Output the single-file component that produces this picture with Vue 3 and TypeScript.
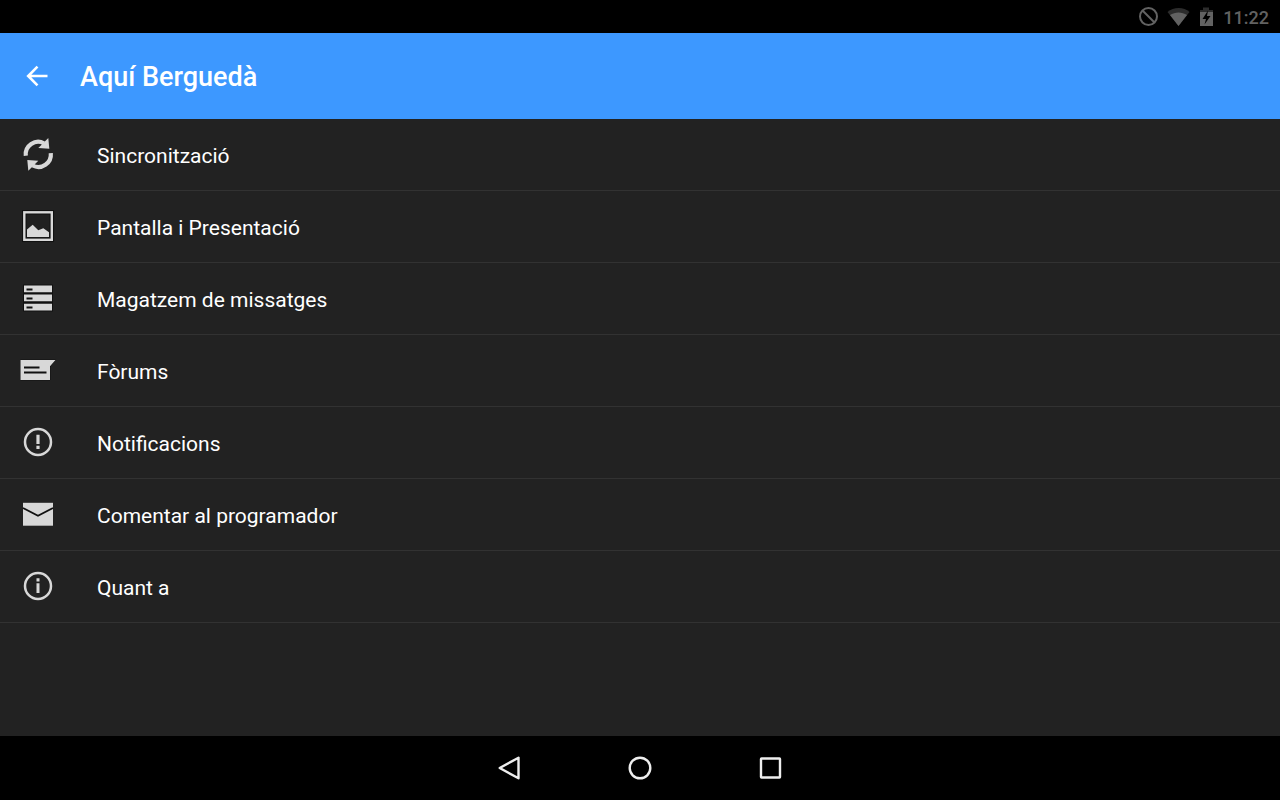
<script setup lang="ts">
type IconName = 'sync' | 'display' | 'storage' | 'forums' | 'alert' | 'mail' | 'info'

interface Entry {
  icon: IconName
  label: string
}

const entries: Entry[] = [
  { icon: 'sync', label: 'Sincronització' },
  { icon: 'display', label: 'Pantalla i Presentació' },
  { icon: 'storage', label: 'Magatzem de missatges' },
  { icon: 'forums', label: 'Fòrums' },
  { icon: 'alert', label: 'Notificacions' },
  { icon: 'mail', label: 'Comentar al programador' },
  { icon: 'info', label: 'Quant a' },
]
</script>

<template>
  <div class="screen">
    <div class="status">
      <svg class="status-icons" width="80" height="33" viewBox="0 0 80 33" aria-hidden="true">
        <g fill="none" stroke="#626262" stroke-width="2">
          <circle cx="13.5" cy="16.5" r="8.5" />
          <path d="M7.5 10.5l12 12" />
        </g>
        <path fill="#2c2c2c" d="M32.5 12C38.500 6.500 49 6.500 54.500 12L43.500 26z" />
        <path fill="#626262" d="M35 15C40 11.500 47 11.500 52 15L43.500 26z" />
        <path fill="#2c2c2c" d="M65 10h3V7.500h6V10h4v4H65z" />
        <path fill="#626262" d="M65 12h13v14H65z" />
        <path fill="#000" d="M73 10.500l-5.500 8.500h3.500l-1.500 5.500 6-8.500H72z" />
      </svg>
      <time class="clock">11:22</time>
    </div>

    <header class="bar">
      <button class="back" type="button" aria-label="Enrere">
        <svg width="24" height="24" viewBox="0 0 24 24" aria-hidden="true">
          <path d="M22.500 12H3.500M12.500 2.700L3.200 12l9.300 9.300" fill="none" stroke="#fff" stroke-width="2.600" />
        </svg>
      </button>
      <h1 class="title">Aquí Berguedà</h1>
    </header>

    <main class="content">
      <ul class="list">
        <li v-for="entry in entries" :key="entry.icon">
          <button class="row" type="button">
            <svg class="icon" width="40" height="41" viewBox="0 0 40 41" aria-hidden="true">
              <g v-if="entry.icon === 'sync'">
                <path d="M7.800 21.700A12.500 12.500 0 0 1 26 9.300" fill="none" stroke="#d8d8d8" stroke-width="4.200" />
                <path d="M30.300 4.100l1 10.600-11-.6z" fill="#d8d8d8" />
                <path d="M32.800 19.100A12.500 12.500 0 0 1 14.600 31.500" fill="none" stroke="#d8d8d8" stroke-width="4.200" />
                <path d="M10.300 36.700l-1-10.600 11 .6z" fill="#d8d8d8" />
              </g>
              <g v-else-if="entry.icon === 'display'">
                <rect x="6.300" y="6.300" width="27.500" height="27.500" fill="#202020" stroke="#111" stroke-width="4.500" />
                <rect x="6.300" y="6.300" width="27.500" height="27.500" fill="none" stroke="#d8d8d8" stroke-width="2.400" />
                <path d="M9 31v-7.500l5.700-4.800 5.600 5.600 5-2 5.700 4V31z" fill="#d8d8d8" />
              </g>
              <g v-else-if="entry.icon === 'storage'">
                <path d="M5 6.500h30v27H5z" fill="#111" />
                <path d="M6 7.500h28v6.800H6zM6 16.500h28v6.800H6zM6 25.700h28v6.800H6z" fill="#d8d8d8" />
                <path d="M8.500 10.500h6v2h-6zM8.500 19.500h6v2h-6zM8.500 28.500h6v2h-6z" fill="#111" />
              </g>
              <g v-else-if="entry.icon === 'forums'">
                <path d="M2.500 10h35L32 16.200V30H2.500z" fill="#d8d8d8" stroke="#111" stroke-width="1" paint-order="stroke" />
                <path d="M6 16.500h15.500v2H6zM6 21.500h22.500v2H6z" fill="#111" />
              </g>
              <g v-else-if="entry.icon === 'alert'">
                <circle cx="20" cy="20" r="13" fill="none" stroke="#d8d8d8" stroke-width="2.500" />
                <path d="M18.400 12.700h3.200V22h-3.200zM18.400 23.700h3.200V27h-3.200z" fill="#d8d8d8" />
              </g>
              <g v-else-if="entry.icon === 'mail'">
                <path d="M5 8.800h30v22.900H5z" fill="#d8d8d8" />
                <path d="M5 14l15 7.700L35 14" fill="none" stroke="#111" stroke-width="1.800" />
              </g>
              <g v-else>
                <circle cx="20" cy="20" r="13" fill="none" stroke="#d8d8d8" stroke-width="2.500" />
                <path d="M18.500 12.300h3v3.200h-3zM18.500 17.300h3V27h-3z" fill="#d8d8d8" />
              </g>
            </svg>
            <span class="label">{{ entry.label }}</span>
          </button>
        </li>
      </ul>
    </main>

    <nav class="nav" aria-label="Sistema">
      <button type="button" aria-label="Enrere">
        <svg width="30" height="30" viewBox="0 0 30 30" aria-hidden="true">
          <path d="M23.500 4.700v20.600L4.700 15z" fill="none" stroke="#eee" stroke-width="2.400" stroke-linejoin="round" />
        </svg>
      </button>
      <button type="button" aria-label="Inici">
        <svg width="30" height="30" viewBox="0 0 30 30" aria-hidden="true">
          <circle cx="15" cy="15" r="10.300" fill="none" stroke="#eee" stroke-width="2.400" />
        </svg>
      </button>
      <button type="button" aria-label="Recents">
        <svg width="30" height="30" viewBox="0 0 30 30" aria-hidden="true">
          <rect x="6" y="5.500" width="19" height="19" rx="0.500" fill="none" stroke="#eee" stroke-width="2.400" />
        </svg>
      </button>
    </nav>
  </div>
</template>

<style>
body {
  margin: 0;
  background: #222;
}
</style>

<style scoped>
.screen {
  display: flex;
  flex-direction: column;
  min-height: 100vh;
  background: #222;
  color: #fff;
  font-family: Roboto, "Noto Sans", sans-serif;
}

button {
  margin: 0;
  padding: 0;
  border: 0;
  background: none;
  color: inherit;
  font: inherit;
  cursor: pointer;
}

svg {
  display: block;
  flex: none;
}

.status {
  display: flex;
  align-items: center;
  justify-content: flex-end;
  gap: 8px;
  height: 33px;
  padding-right: 11px;
  background: #000;
}

.clock {
  padding-top: 2px;
  color: #626262;
  font-size: 18px;
  font-weight: 500;
  line-height: 28px;
}

.bar {
  display: flex;
  align-items: center;
  gap: 31px;
  box-sizing: border-box;
  height: 86px;
  padding: 0 25px;
  background: #3d98ff;
}

.title {
  margin: 0;
  padding-top: 2px;
  font-size: 27px;
  font-weight: 500;
  line-height: 32px;
}

.content {
  flex: 1;
}

.list {
  margin: 0;
  padding: 0;
  list-style: none;
}

.row {
  display: flex;
  align-items: center;
  gap: 39px;
  box-sizing: border-box;
  width: 100%;
  height: 72px;
  padding: 0 18px;
  border-bottom: 1px solid #323232;
  font-size: 21px;
  line-height: 28px;
  text-align: left;
}

.label {
  padding-top: 2px;
}

.nav {
  display: flex;
  align-items: center;
  justify-content: center;
  gap: 100px;
  height: 64px;
  background: #000;
}
</style>
